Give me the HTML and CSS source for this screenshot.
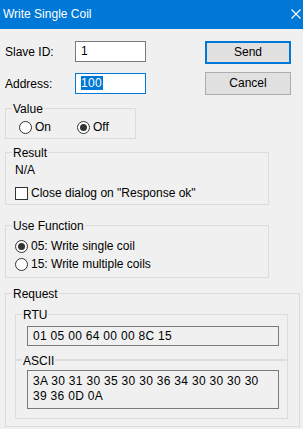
FILE: index.html
```html
<!DOCTYPE html>
<html lang="en">
<head>
    <meta charset="UTF-8">
    <meta name="viewport" content="width=device-width, initial-scale=1.0">
    <title>Write Single Coil</title>
    <link rel="stylesheet" href="styles.css">
</head>
<body>
  <div class="dialog">
    <div class="titlebar">
        <span class="title">Write Single Coil</span>
        <svg class="close" width="10" height="10" viewBox="0 0 10 10">
            <path d="M0.5 0.5 L9.5 9.5 M9.5 0.5 L0.5 9.5" stroke="#fff" stroke-width="1.1" fill="none"/>
        </svg>
    </div>
    <div class="content">
        <div class="top">
            <div class="fields">
                <div class="field">
                    <span class="field-label">Slave ID:</span>
                    <div class="textbox">1</div>
                </div>
                <div class="field">
                    <span class="field-label">Address:</span>
                    <div class="textbox focused"><span class="selected">100</span></div>
                </div>
            </div>
            <div class="buttons">
                <div class="button default">Send</div>
                <div class="button">Cancel</div>
            </div>
        </div>

        <div class="group group-value">
            <div class="group-title">Value</div>
            <div class="value-row">
                <span class="option"><span class="radio"></span>On</span>
                <span class="option"><span class="radio checked"></span>Off</span>
            </div>
        </div>

        <div class="group group-result">
            <div class="group-title">Result</div>
            <div class="result-text">N/A</div>
            <div class="check-row"><span class="checkbox"></span>Close dialog on "Response ok"</div>
        </div>

        <div class="group group-function">
            <div class="group-title">Use Function</div>
            <div class="function-row"><span class="radio checked"></span>05: Write single coil</div>
            <div class="function-row"><span class="radio"></span>15: Write multiple coils</div>
        </div>

        <div class="group group-request">
            <div class="group-title">Request</div>
            <div class="group group-rtu">
                <div class="group-title">RTU</div>
                <div class="readonly rtu-box">01 05 00 64 00 00 8C 15</div>
            </div>
            <div class="group group-ascii">
                <div class="group-title">ASCII</div>
                <div class="readonly ascii-box">3A 30 31 30 35 30 30 36 34 30 30 30 30<br>39 36 0D 0A</div>
            </div>
        </div>
    </div>
  </div>
</body>
</html>
```

FILE: styles.css
```css
* {
    box-sizing: border-box;
}
body {
    font-family: "Liberation Sans", Arial, sans-serif;
    font-size: 12px;
    background-color: #f0f0f0;
    margin: 0;
    padding: 0;
    color: #000;
}
.dialog {
    width: 303px;
    height: 429px;
    overflow: hidden;
}
.titlebar {
    height: 29px;
    background-color: #0078d7;
    color: #fff;
    display: flex;
    align-items: center;
    justify-content: space-between;
    padding: 0 2px 1px 3px;
}
.title {
    line-height: 14px;
}
.close {
    margin-bottom: 1px;
}
.content {
    padding-left: 5px;
}
.top {
    display: flex;
    justify-content: space-between;
    margin-top: 12px;
    padding-right: 12px;
}
.fields {
    display: flex;
    flex-direction: column;
    gap: 11px;
}
.field {
    display: flex;
    align-items: center;
    height: 21px;
}
.field-label {
    width: 70px;
}
.textbox {
    width: 71px;
    height: 21px;
    background-color: #fff;
    border: 1px solid #7a7a7a;
    padding: 0 5px;
    line-height: 19px;
}
.textbox.focused {
    border-color: #0078d7;
}
.selected {
    background-color: #0078d7;
    color: #fff;
    display: inline-block;
    line-height: 14px;
    padding: 0 1px 0 0;
    letter-spacing: 0.3px;
}
.buttons {
    display: flex;
    flex-direction: column;
    gap: 8px;
}
.button {
    width: 86px;
    height: 23px;
    background-color: #e1e1e1;
    border: 1px solid #adadad;
    text-align: center;
    line-height: 21px;
}
.button.default {
    border: 2px solid #0078d7;
    line-height: 19px;
}
.group {
    border: 1px solid #dcdcdc;
}
.group-title {
    display: table;
    height: 14px;
    line-height: 14px;
    margin: -7px 0 0 6px;
    padding: 0 1px;
    background-color: #f0f0f0;
}
.radio {
    display: inline-flex;
    align-items: center;
    justify-content: center;
    width: 13px;
    height: 13px;
    border: 1px solid #333;
    border-radius: 50%;
    background-color: #fff;
    margin-right: 3px;
    flex-shrink: 0;
}
.radio.checked::after {
    content: "";
    width: 7px;
    height: 7px;
    border-radius: 50%;
    background-color: #333;
}
.checkbox {
    display: inline-block;
    width: 13px;
    height: 13px;
    border: 1px solid #333;
    background-color: #fff;
    margin-right: 3px;
}
.group-value {
    width: 131px;
    margin-top: 13px;
    padding: 0 0 3px 13px;
}
.group-value .group-title {
    margin-left: -7px;
}
.value-row {
    display: flex;
    height: 16px;
    margin-top: 3px;
}
.option {
    display: flex;
    align-items: center;
    width: 61px;
}
.group-result {
    width: 264px;
    margin-top: 13px;
    padding: 0 0 4px 9px;
}
.group-result .group-title,
.group-function .group-title {
    margin-left: -3px;
}
.result-text {
    height: 14px;
    line-height: 14px;
    margin-top: 3px;
}
.check-row {
    display: flex;
    align-items: center;
    height: 14px;
    margin-top: 9px;
}
.group-function {
    width: 264px;
    margin-top: 20px;
    padding: 0 0 4px 9px;
}
.group-function .group-title {
    margin-bottom: 4px;
}
.function-row {
    display: flex;
    align-items: center;
    height: 18px;
}
.group-request {
    width: 295px;
    margin-top: 15px;
    padding: 0 10px 7px 9px;
}
.group-request > .group-title {
    margin-left: -3px;
    margin-bottom: 13px;
}
.group-rtu {
    width: 273px;
    padding: 0 0 13px 11px;
}
.group-rtu .group-title,
.group-ascii .group-title {
    margin-left: -5px;
}
.group-ascii {
    width: 273px;
    padding: 0 0 9px 11px;
}
.readonly {
    width: 252px;
    background-color: #f0f0f0;
    border: 1px solid #7a7a7a;
    padding: 0 5px;
    letter-spacing: 0.3px;
}
.rtu-box {
    height: 20px;
    line-height: 18px;
    margin-top: 4px;
}
.ascii-box {
    height: 39px;
    line-height: 15px;
    padding-top: 3px;
    margin-top: 2px;
}
```
